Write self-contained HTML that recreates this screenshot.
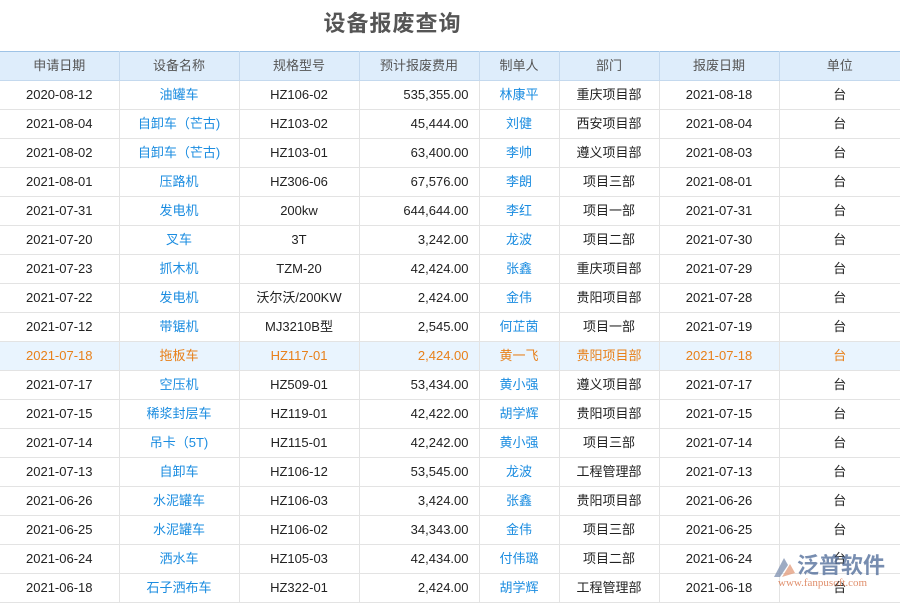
<!DOCTYPE html><html><head><meta charset="utf-8"><style>
body{margin:0;width:900px;height:600px;overflow:hidden;background:#fff;font-family:"Liberation Sans","Noto Sans CJK SC",sans-serif;}
h1{position:absolute;left:0;width:785px;top:9px;margin:0;text-align:center;font-size:22px;line-height:30px;color:#555;font-weight:bold;letter-spacing:1px}
table{position:absolute;top:51px;left:0;border-collapse:collapse;table-layout:fixed;width:901px;font-size:13px;color:#222}
td,th{height:28px;padding:0 0 1px 0;line-height:14px;text-align:center;border:1px solid #e3e3e3;white-space:nowrap;box-sizing:border-box}
tr{height:29px}
th{background:#deedfb;color:#555;font-weight:normal;border-color:#c4d9ee;border-top:1px solid #9ec3e6}
td:first-child,th:first-child{border-left:none}
.r{text-align:right;padding-right:10px}
.b{color:#1a8ce0}
tr.h td{background:#e9f4fe;color:#e8801a}
.wm{opacity:0.75}
.logo{position:absolute;left:797px;top:553px;font-size:22px;line-height:26px;color:#4a6796;font-weight:bold}
.url{position:absolute;left:778px;top:577px;font-size:11px;color:#d66a3c;font-family:"Liberation Serif",serif}
</style></head><body>
<h1>设备报废查询</h1>
<table>
<colgroup><col style="width:119px"><col style="width:120px"><col style="width:120px"><col style="width:120px"><col style="width:80px"><col style="width:100px"><col style="width:120px"><col></colgroup>
<tr><th>申请日期</th><th>设备名称</th><th>规格型号</th><th>预计报废费用</th><th>制单人</th><th>部门</th><th>报废日期</th><th>单位</th></tr>
<tr><td>2020-08-12</td><td class="b">油罐车</td><td>HZ106-02</td><td class="r">535,355.00</td><td class="b">林康平</td><td>重庆项目部</td><td>2021-08-18</td><td>台</td></tr>
<tr><td>2021-08-04</td><td class="b">自卸车（芒古)</td><td>HZ103-02</td><td class="r">45,444.00</td><td class="b">刘健</td><td>西安项目部</td><td>2021-08-04</td><td>台</td></tr>
<tr><td>2021-08-02</td><td class="b">自卸车（芒古)</td><td>HZ103-01</td><td class="r">63,400.00</td><td class="b">李帅</td><td>遵义项目部</td><td>2021-08-03</td><td>台</td></tr>
<tr><td>2021-08-01</td><td class="b">压路机</td><td>HZ306-06</td><td class="r">67,576.00</td><td class="b">李朗</td><td>项目三部</td><td>2021-08-01</td><td>台</td></tr>
<tr><td>2021-07-31</td><td class="b">发电机</td><td>200kw</td><td class="r">644,644.00</td><td class="b">李红</td><td>项目一部</td><td>2021-07-31</td><td>台</td></tr>
<tr><td>2021-07-20</td><td class="b">叉车</td><td>3T</td><td class="r">3,242.00</td><td class="b">龙波</td><td>项目二部</td><td>2021-07-30</td><td>台</td></tr>
<tr><td>2021-07-23</td><td class="b">抓木机</td><td>TZM-20</td><td class="r">42,424.00</td><td class="b">张鑫</td><td>重庆项目部</td><td>2021-07-29</td><td>台</td></tr>
<tr><td>2021-07-22</td><td class="b">发电机</td><td>沃尔沃/200KW</td><td class="r">2,424.00</td><td class="b">金伟</td><td>贵阳项目部</td><td>2021-07-28</td><td>台</td></tr>
<tr><td>2021-07-12</td><td class="b">带锯机</td><td>MJ3210B型</td><td class="r">2,545.00</td><td class="b">何芷茵</td><td>项目一部</td><td>2021-07-19</td><td>台</td></tr>
<tr class="h"><td>2021-07-18</td><td>拖板车</td><td>HZ117-01</td><td class="r">2,424.00</td><td>黄一飞</td><td>贵阳项目部</td><td>2021-07-18</td><td>台</td></tr>
<tr><td>2021-07-17</td><td class="b">空压机</td><td>HZ509-01</td><td class="r">53,434.00</td><td class="b">黄小强</td><td>遵义项目部</td><td>2021-07-17</td><td>台</td></tr>
<tr><td>2021-07-15</td><td class="b">稀浆封层车</td><td>HZ119-01</td><td class="r">42,422.00</td><td class="b">胡学辉</td><td>贵阳项目部</td><td>2021-07-15</td><td>台</td></tr>
<tr><td>2021-07-14</td><td class="b">吊卡（5T)</td><td>HZ115-01</td><td class="r">42,242.00</td><td class="b">黄小强</td><td>项目三部</td><td>2021-07-14</td><td>台</td></tr>
<tr><td>2021-07-13</td><td class="b">自卸车</td><td>HZ106-12</td><td class="r">53,545.00</td><td class="b">龙波</td><td>工程管理部</td><td>2021-07-13</td><td>台</td></tr>
<tr><td>2021-06-26</td><td class="b">水泥罐车</td><td>HZ106-03</td><td class="r">3,424.00</td><td class="b">张鑫</td><td>贵阳项目部</td><td>2021-06-26</td><td>台</td></tr>
<tr><td>2021-06-25</td><td class="b">水泥罐车</td><td>HZ106-02</td><td class="r">34,343.00</td><td class="b">金伟</td><td>项目三部</td><td>2021-06-25</td><td>台</td></tr>
<tr><td>2021-06-24</td><td class="b">洒水车</td><td>HZ105-03</td><td class="r">42,434.00</td><td class="b">付伟璐</td><td>项目二部</td><td>2021-06-24</td><td>台</td></tr>
<tr><td>2021-06-18</td><td class="b">石子洒布车</td><td>HZ322-01</td><td class="r">2,424.00</td><td class="b">胡学辉</td><td>工程管理部</td><td>2021-06-18</td><td>台</td></tr>
</table>
<div class="wm">
<svg style="position:absolute;left:770px;top:555px" width="26" height="26"><path d="M4 22 L14 3 L18 10 L10 22Z" fill="#7d8fb0"/><path d="M12 22 L20 9 L25 18 Z" fill="#e29a7a"/></svg>
<div class="logo">泛普软件</div>
<div class="url">www.fanpusoft.com</div>
</div>
</body></html>
